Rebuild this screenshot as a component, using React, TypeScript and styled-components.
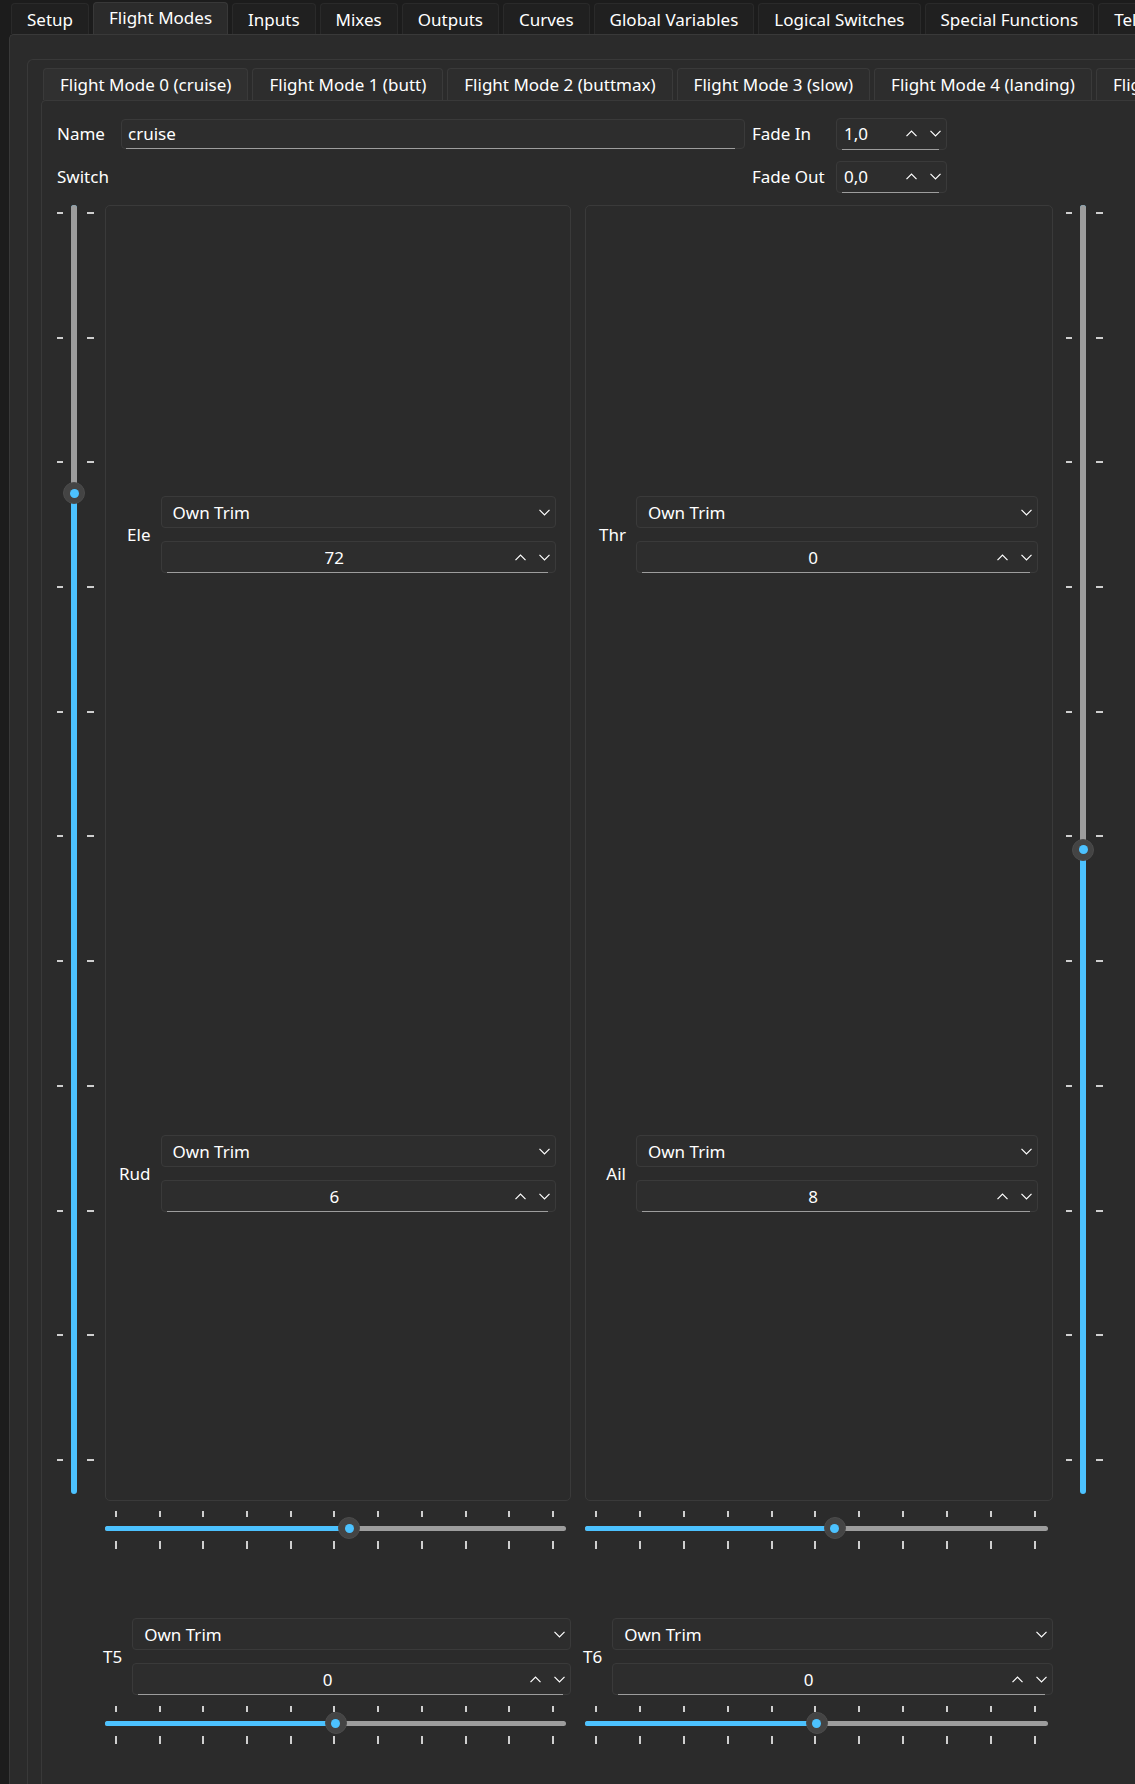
import React from "react";
import styled, { createGlobalStyle } from "styled-components";

const GlobalStyle = createGlobalStyle`
  html, body {
    margin: 0;
    background: #1c1c1c;
  }
  body {
    font-family: "Noto Sans", "Open Sans", sans-serif;
    font-size: 17px;
    color: #ffffff;
    overflow: hidden;
  }
  * {
    box-sizing: border-box;
  }
`;

const BLUE = "#4cc2ff";
const GROOVE = "#9d9d9d";
const LINE = "#393939";

const Window = styled.div`
  width: 1135px;
  height: 1784px;
  display: flex;
  flex-direction: column;
  overflow: hidden;
`;

const TabBar = styled.div`
  display: flex;
  align-items: flex-end;
  gap: 4px;
  height: 34px;
  padding-left: 11px;
  flex-shrink: 0;
`;

const Tab = styled.div<{ $active?: boolean }>`
  flex-shrink: 0;
  height: ${(p) => (p.$active ? 32 : 31)}px;
  padding: 0 15px ${(p) => (p.$active ? 3 : 0)}px;
  display: flex;
  align-items: center;
  white-space: nowrap;
  background: ${(p) => (p.$active ? "#2b2b2b" : "#202020")};
  border: 1px solid ${(p) => (p.$active ? "#383838" : "#2a2a2a")};
  border-bottom: none;
  border-radius: 4px 4px 0 0;
`;

const Page = styled.div`
  flex: 1;
  width: 1400px;
  margin-left: 9px;
  display: flex;
  flex-direction: column;
  background: #2b2b2b;
  border-top: 1px solid ${LINE};
  border-left: 1px solid ${LINE};
  border-radius: 5px 0 0 0;
  padding: 24px 0 0 17px;
`;

const GroupFrame = styled.div`
  flex: 1;
  display: flex;
  flex-direction: column;
  border-top: 1px solid ${LINE};
  border-left: 1px solid ${LINE};
  border-radius: 6px 0 0 0;
  padding: 8px 0 0 13px;
`;

const ModeTabBar = styled.div`
  display: flex;
  gap: 4px;
  height: 32px;
  margin-left: 2px;
`;

const ModeTab = styled.div<{ $active?: boolean }>`
  flex-shrink: 0;
  display: flex;
  align-items: center;
  padding: 0 16px;
  white-space: nowrap;
  background: ${(p) => (p.$active ? "#303030" : "#2d2d2d")};
  border: 1px solid #3a3a3a;
  border-bottom: none;
  border-radius: 4px 4px 0 0;
`;

const ModePage = styled.div`
  flex: 1;
  border-top: 1px solid ${LINE};
  border-left: 1px solid ${LINE};
  border-radius: 5px 0 0 0;
  padding: 17px 0 0 15px;
`;

const HeaderGrid = styled.div`
  display: grid;
  grid-template-columns: 64px 631px 84px 111px;
  grid-auto-rows: 31px;
  row-gap: 12px;
  align-items: center;
`;

const FieldLabel = styled.span`
  white-space: nowrap;
`;

const TextField = styled.div`
  position: relative;
  width: calc(100% - 7px);
  height: 30px;
  display: flex;
  align-items: center;
  padding-left: 6px;
  background: #2d2d2d;
  border: 1px solid #3a3a3a;
  border-radius: 4px;

  &::after {
    content: "";
    position: absolute;
    left: 4px;
    right: 9px;
    bottom: -1px;
    height: 1px;
    background: ${GROOVE};
  }
`;

const SpinFrame = styled.div`
  position: relative;
  height: 32px;
  display: flex;
  align-items: center;
  background: #2d2d2d;
  border: 1px solid #3a3a3a;
  border-radius: 4px;

  &::after {
    content: "";
    position: absolute;
    left: 5px;
    right: 7px;
    bottom: -1px;
    height: 1px;
    background: ${GROOVE};
  }
`;

const SpinValue = styled.span<{ $center?: boolean }>`
  flex: 1;
  padding: ${(p) => (p.$center ? "0 8px 0 0" : "0 0 0 7px")};
  text-align: ${(p) => (p.$center ? "center" : "left")};
`;

const SpinButtons = styled.div`
  display: flex;
  align-items: center;
  gap: 13px;
  padding-right: 5px;
`;

const Combo = styled.div`
  height: 32px;
  display: flex;
  align-items: center;
  justify-content: space-between;
  padding: 0 5px 0 11px;
  background: #2d2d2d;
  border: 1px solid #3a3a3a;
  border-radius: 4px;
`;

const Body = styled.div`
  display: grid;
  grid-template-columns: 48px 466px 14px 468px 60px;
  grid-template-rows: 1296px auto auto auto;
  margin-top: 13px;
`;

/* both trims of a panel share the label column, like a form layout */
const Panel = styled.div<{ $col: number }>`
  grid-column: ${(p) => p.$col};
  grid-row: 1;
  display: grid;
  grid-template-columns: auto 1fr;
  grid-template-rows: 1fr 1fr;
  column-gap: 10px;
  padding: 0 14px 0 13px;
  border: 1px solid #3a3a3a;
  border-radius: 5px;
`;

const TrimGrid = styled.div<{ $shared?: boolean; $nudge?: number }>`
  display: grid;
  grid-column: ${(p) => (p.$shared ? "1 / -1" : "auto")};
  grid-template-columns: ${(p) => (p.$shared ? "subgrid" : "auto 1fr")};
  grid-template-rows: 32px 32px;
  column-gap: 10px;
  row-gap: 13px;
  align-items: center;
  align-self: center;
  margin: ${(p) => Math.max(p.$nudge ?? 0, 0) * 2}px 0 ${(p) => Math.max(-(p.$nudge ?? 0), 0) * 2}px;
`;

const TrimLabel = styled.span`
  grid-row: 1 / span 2;
  justify-self: end;
`;

const TrimRow = styled.div`
  grid-column: 1 / -1;
  grid-row: 3;
  display: grid;
  grid-template-columns: 468px 470px;
  column-gap: 12px;
  padding-left: 46px;
  margin-top: 69px;
`;

/* vertical trim slider */
const VSliderWrap = styled.div<{ $col: number; $inset: number }>`
  grid-column: ${(p) => p.$col};
  grid-row: 1;
  display: flex;
  height: 1289px;
  padding-left: ${(p) => p.$inset}px;
`;

const VTicks = styled.div<{ $gap: number }>`
  display: flex;
  flex-direction: column;
  justify-content: space-between;
  padding: 7px 0 33px;
  margin-left: ${(p) => p.$gap}px;
`;

const Dash = styled.span<{ $w: number }>`
  display: block;
  width: ${(p) => p.$w}px;
  height: 2px;
  background: #cfcfcf;
`;

const VGroove = styled.div`
  position: relative;
  width: 6px;
  margin-left: 8px;
  display: flex;
  flex-direction: column;
  border-radius: 3px;
  background: ${BLUE};
`;

const VRest = styled.div`
  background: ${GROOVE};
  border-radius: 3px 3px 0 0;
`;

/* horizontal trim slider */
const HSliderWrap = styled.div<{ $col: number; $row: number; $top: number }>`
  grid-column: ${(p) => p.$col};
  grid-row: ${(p) => p.$row};
  margin: ${(p) => p.$top}px 5px 0 0;
  display: flex;
  flex-direction: column;
`;

const HTicks = styled.div<{ $len: number; $gap?: number }>`
  display: flex;
  justify-content: space-between;
  height: ${(p) => p.$len}px;
  margin-top: ${(p) => p.$gap ?? 0}px;
  padding: 0 12px 0 10px;
`;

const HTick = styled.span`
  width: 2px;
  height: 100%;
  background: #cfcfcf;
`;

const HGroove = styled.div`
  position: relative;
  height: 22px;
  display: flex;
  align-items: center;
`;

const HTrack = styled.div`
  flex: 1;
  height: 5px;
  display: flex;
  border-radius: 3px;
  overflow: hidden;
  background: ${GROOVE};
`;

const HFill = styled.div`
  background: ${BLUE};
`;

const Knob = styled.span<{ $vertical?: boolean }>`
  position: absolute;
  width: 22px;
  height: 22px;
  border-radius: 50%;
  background: #444444;
  border: 1px solid #4c4c4c;
  display: flex;
  align-items: center;
  justify-content: center;
  transform: translate(-50%, -50%);
  ${(p) => (p.$vertical ? "left: 50%;" : "top: 50%;")}

  &::after {
    content: "";
    width: 9px;
    height: 9px;
    border-radius: 50%;
    background: ${BLUE};
  }
`;

const Chevron = ({ up }: { up?: boolean }) => (
  <svg width="11" height="7" viewBox="0 0 11 7" fill="none">
    <polyline
      points={up ? "0.5,6.2 5.5,1 10.5,6.2" : "0.5,0.8 5.5,6 10.5,0.8"}
      stroke="#ffffff"
      strokeWidth="1.2"
    />
  </svg>
);

const SpinBox = ({ value, center }: { value: string; center?: boolean }) => (
  <SpinFrame>
    <SpinValue $center={center}>{value}</SpinValue>
    <SpinButtons>
      <Chevron up />
      <Chevron />
    </SpinButtons>
  </SpinFrame>
);

type TrimProps = { label: string; value: number; shared?: boolean; nudge?: number };

const TrimControl = ({ label, value, shared, nudge }: TrimProps) => (
  <TrimGrid $shared={shared} $nudge={nudge}>
    <TrimLabel>{label}</TrimLabel>
    <Combo>
      Own Trim
      <Chevron />
    </Combo>
    <SpinBox value={String(value)} center />
  </TrimGrid>
);

const TICKS = Array.from({ length: 11 }, (_, i) => i);

const VSlider = ({ col, inset, value, max }: { col: number; inset: number; value: number; max: number }) => {
  const pos = `calc(11px + ${0.5 - value / (2 * max)} * (100% - 22px))`;
  return (
    <VSliderWrap $col={col} $inset={inset}>
      <VTicks $gap={0}>
        {TICKS.map((t) => (
          <Dash key={t} $w={6} />
        ))}
      </VTicks>
      <VGroove>
        <VRest style={{ height: pos }} />
        <Knob $vertical style={{ top: pos }} />
      </VGroove>
      <VTicks $gap={10}>
        {TICKS.map((t) => (
          <Dash key={t} $w={7} />
        ))}
      </VTicks>
    </VSliderWrap>
  );
};

const HSlider = ({ col, row, top, value, max }: { col: number; row: number; top: number; value: number; max: number }) => {
  const pos = `calc(11px + ${0.5 + value / (2 * max)} * (100% - 22px))`;
  return (
    <HSliderWrap $col={col} $row={row} $top={top}>
      <HTicks $len={6}>
        {TICKS.map((t) => (
          <HTick key={t} />
        ))}
      </HTicks>
      <HGroove>
        <HTrack>
          <HFill style={{ width: pos }} />
        </HTrack>
        <Knob style={{ left: pos }} />
      </HGroove>
      <HTicks $len={8} $gap={2}>
        {TICKS.map((t) => (
          <HTick key={t} />
        ))}
      </HTicks>
    </HSliderWrap>
  );
};

const tabs = [
  "Setup",
  "Flight Modes",
  "Inputs",
  "Mixes",
  "Outputs",
  "Curves",
  "Global Variables",
  "Logical Switches",
  "Special Functions",
  "Telemetry",
];

const modes = [
  "Flight Mode 0 (cruise)",
  "Flight Mode 1 (butt)",
  "Flight Mode 2 (buttmax)",
  "Flight Mode 3 (slow)",
  "Flight Mode 4 (landing)",
  "Flight Mode 5",
];

const App = () => {
  return (
    <Window>
      <GlobalStyle />
      <TabBar>
        {tabs.map((t) => (
          <Tab key={t} $active={t === "Flight Modes"}>
            {t}
          </Tab>
        ))}
      </TabBar>
      <Page>
        <GroupFrame>
          <ModeTabBar>
            {modes.map((m, i) => (
              <ModeTab key={m} $active={i === 0}>
                {m}
              </ModeTab>
            ))}
          </ModeTabBar>
          <ModePage>
            <HeaderGrid>
              <FieldLabel>Name</FieldLabel>
              <TextField>cruise</TextField>
              <FieldLabel>Fade In</FieldLabel>
              <SpinBox value="1,0" />
              <FieldLabel>Switch</FieldLabel>
              <span />
              <FieldLabel>Fade Out</FieldLabel>
              <SpinBox value="0,0" />
            </HeaderGrid>

            <Body>
              <VSlider col={1} inset={0} value={72} max={128} />
              <Panel $col={2}>
                <TrimControl label="Ele" value={72} shared nudge={5} />
                <TrimControl label="Rud" value={6} shared nudge={-3} />
              </Panel>
              <Panel $col={4}>
                <TrimControl label="Thr" value={0} shared nudge={5} />
                <TrimControl label="Ail" value={8} shared nudge={-3} />
              </Panel>
              <VSlider col={5} inset={13} value={0} max={128} />

              <HSlider col={2} row={2} top={10} value={6} max={96} />
              <HSlider col={4} row={2} top={10} value={8} max={96} />

              <TrimRow>
                <TrimControl label="T5" value={0} />
                <TrimControl label="T6" value={0} />
              </TrimRow>

              <HSlider col={2} row={4} top={11} value={0} max={96} />
              <HSlider col={4} row={4} top={11} value={0} max={96} />
            </Body>
          </ModePage>
        </GroupFrame>
      </Page>
    </Window>
  );
};

export default App;
